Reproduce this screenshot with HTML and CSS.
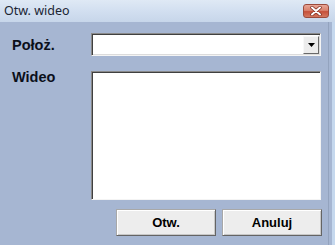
FILE: index.html
```html
<!DOCTYPE html>
<html lang="pl">
<head>
<meta charset="utf-8">
<title>Otw. wideo</title>
<link rel="stylesheet" href="styles.css">
</head>
<body>
<div class="window">
  <div class="titlebar">
    <span class="title">Otw. wideo</span>
    <div class="close">
      <svg width="14" height="10" viewBox="0 0 14 10">
        <path d="M3 1.5 L11 8.5 M11 1.5 L3 8.5" stroke="#7a2a1e" stroke-width="3.4" stroke-linecap="round"/>
        <path d="M3 1.5 L11 8.5 M11 1.5 L3 8.5" stroke="#ffffff" stroke-width="2" stroke-linecap="round"/>
      </svg>
    </div>
  </div>
  <div class="client">
    <div class="form">
      <div class="label label-mid">Położ.</div>
      <div class="combo">
        <div class="combo-field"></div>
        <div class="combo-btn">
          <svg width="7" height="4" viewBox="0 0 7 4"><path d="M0 0 H7 L3.5 4 Z" fill="#000"/></svg>
        </div>
      </div>
      <div class="label label-top">Wideo</div>
      <div class="listbox"></div>
    </div>
    <div class="buttons">
      <button class="btn">Otw.</button>
      <button class="btn">Anuluj</button>
    </div>
  </div>
</div>
</body>
</html>
```

FILE: styles.css
```css
html, body {
  margin: 0;
  padding: 0;
  background: #a6b6d2;
}
.window {
  width: 335px;
  height: 245px;
  display: flex;
  flex-direction: column;
  background: #a6b6d2;
  overflow: hidden;
}
.titlebar {
  height: 22px;
  flex: none;
  display: flex;
  align-items: flex-start;
  justify-content: space-between;
  background: linear-gradient(to bottom, #dfe9f5 0%, #d2dff0 50%, #c7d6ea 100%);
  padding: 0 6px 0 4px;
  box-sizing: border-box;
}
.title {
  font-family: "Noto Sans", "DejaVu Sans", sans-serif;
  font-size: 12.5px;
  line-height: 15px;
  margin-top: 3px;
  color: #1b2533;
}
.close {
  margin-top: 4px;
  width: 26px;
  height: 14px;
  box-sizing: border-box;
  border: 1px solid #9b4a3c;
  border-radius: 3px;
  background: linear-gradient(to bottom, #e8a595 0%, #d9826e 45%, #c6503a 55%, #d3775f 100%);
  display: flex;
  align-items: center;
  justify-content: center;
}
.client {
  flex: 1;
  display: flex;
  flex-direction: column;
  padding: 11px 13px 0 12px;
  box-shadow: inset -3px 0 0 #c5d8ee, inset -6px 0 0 #a6b6d2, inset -7px 0 0 #93a3be;
}
.form {
  display: grid;
  grid-template-columns: 79px 230px;
  grid-template-rows: 23px 129px;
  row-gap: 15px;
}
.label {
  font-family: "Liberation Sans", Arial, sans-serif;
  font-weight: bold;
  font-size: 14.5px;
  line-height: 16px;
  color: #0b0f1a;
}
.label-mid {
  align-self: center;
}
.label-top {
  margin-top: -2px;
}
.combo {
  display: flex;
  box-sizing: border-box;
  border-style: solid;
  border-width: 1px;
  border-color: #8a8a8a #f4f4f4 #f4f4f4 #8a8a8a;
  box-shadow: inset 1px 1px 0 #404040, inset -1px -1px 0 #dcdcdc;
  background: #ffffff;
  padding: 2px 1px 1px 2px;
}
.combo-field {
  flex: 1;
}
.combo-btn {
  width: 16px;
  box-sizing: border-box;
  border-style: solid;
  border-width: 1px;
  border-color: #f8f8f8 #696969 #696969 #f8f8f8;
  background: #ececec;
  display: flex;
  align-items: center;
  justify-content: center;
}
.listbox {
  box-sizing: border-box;
  background: #ffffff;
  border-style: solid;
  border-width: 1px;
  border-color: #8a8a8a #f4f4f4 #f4f4f4 #8a8a8a;
  box-shadow: inset 1px 1px 0 #404040;
}
.buttons {
  display: flex;
  justify-content: flex-end;
  gap: 6px;
  margin-top: 9px;
}
.btn {
  width: 100px;
  height: 27px;
  box-sizing: border-box;
  margin: 0;
  padding: 0;
  font-family: "Liberation Sans", Arial, sans-serif;
  font-weight: bold;
  font-size: 13px;
  color: #000000;
  background: #ededed;
  border-style: solid;
  border-width: 1px;
  border-color: #a8a8a8 #646464 #646464 #a8a8a8;
  box-shadow: inset 1px 1px 0 #ffffff, inset -1px -1px 0 #c8c8c8;
}
```
